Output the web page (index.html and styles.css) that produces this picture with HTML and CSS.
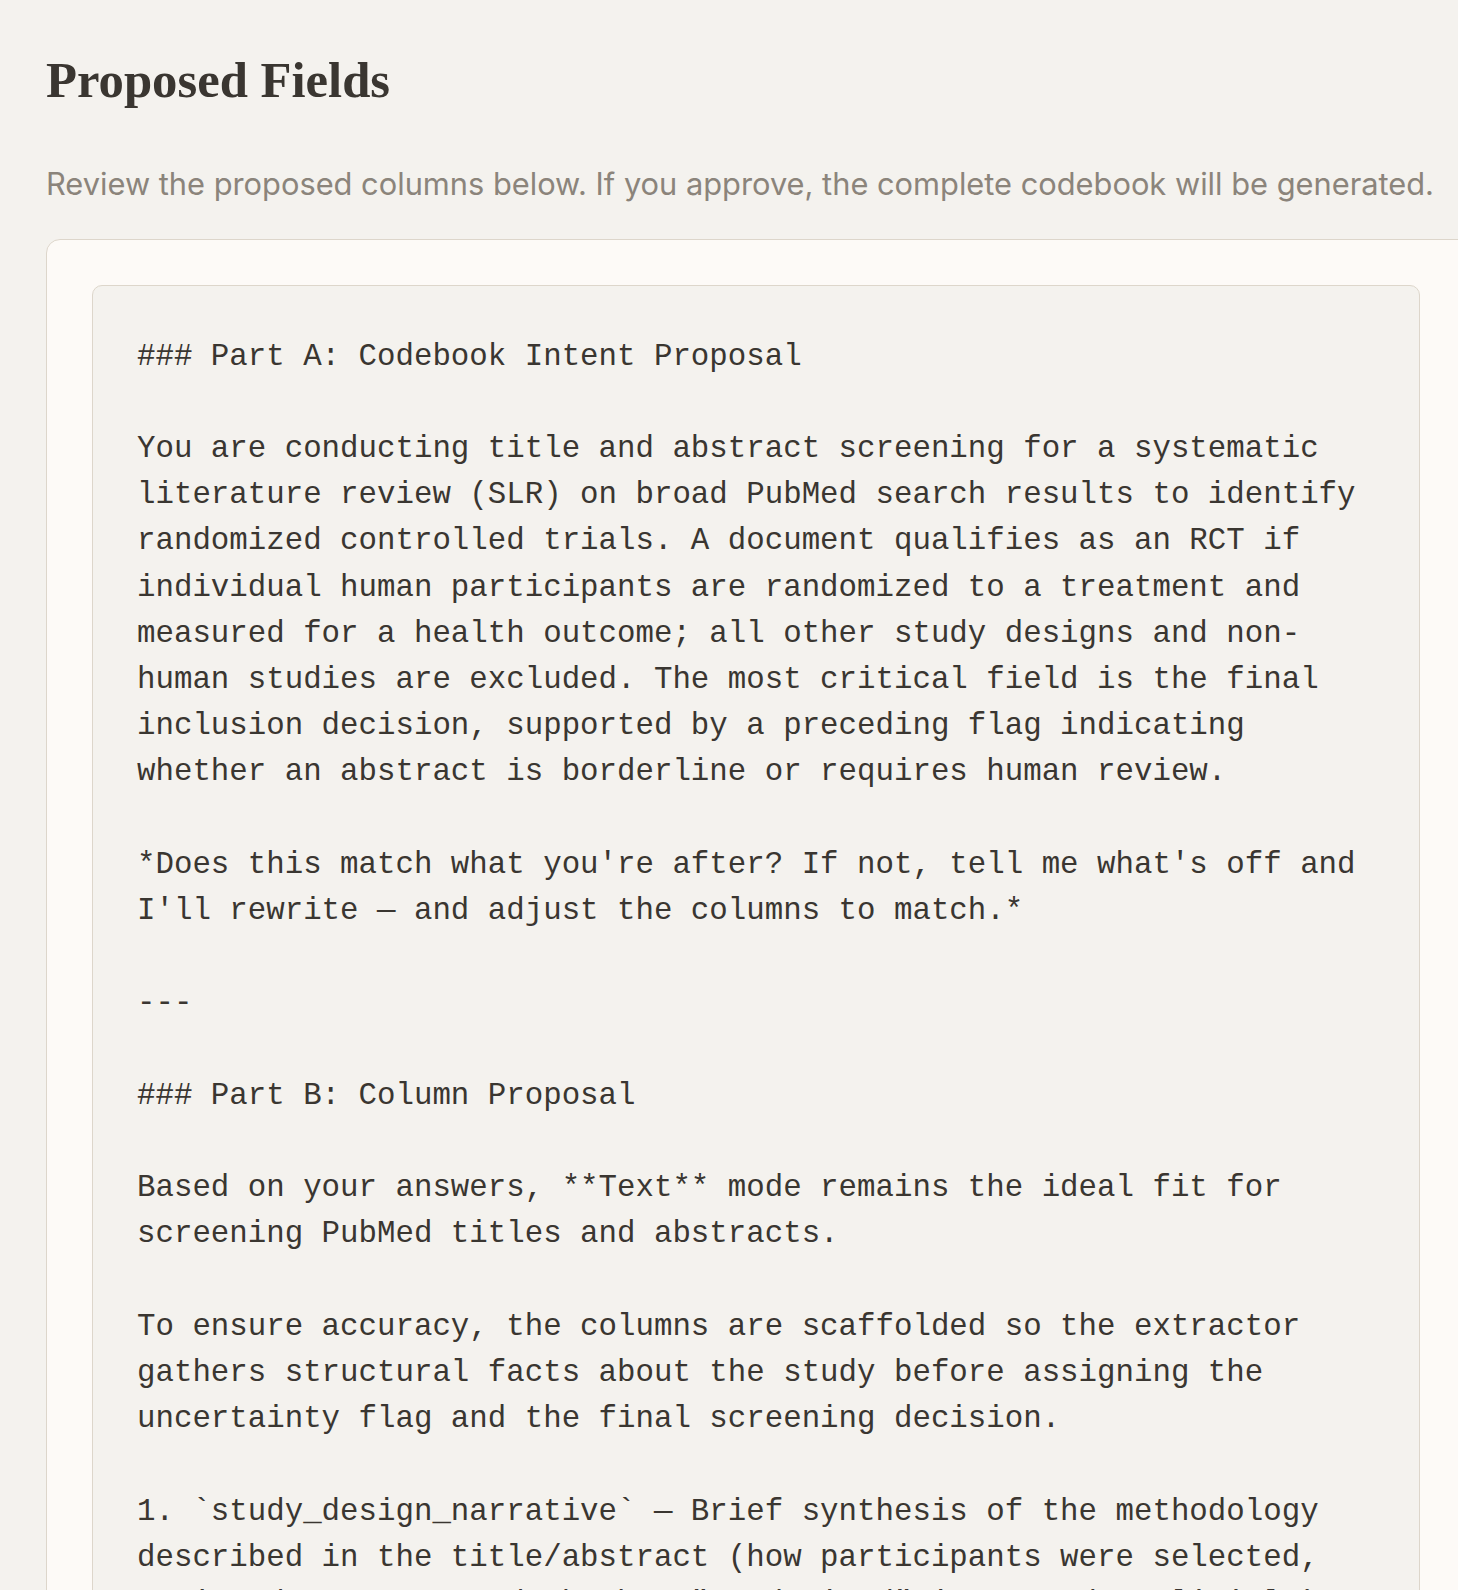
FILE: index.html
```html
<!DOCTYPE html>
<html lang="en">
<head>
<meta charset="utf-8">
<title>Proposed Fields</title>
<link rel="stylesheet" href="styles.css">
</head>
<body>
<main class="page">
  <h1 class="title">Proposed Fields</h1>
  <p class="subtitle">Review the proposed columns below. If you approve, the complete codebook will be generated.</p>
  <section class="card">
<pre class="proposal">### Part A: Codebook Intent Proposal

You are conducting title and abstract screening for a systematic
literature review (SLR) on broad PubMed search results to identify
randomized controlled trials. A document qualifies as an RCT if
individual human participants are randomized to a treatment and
measured for a health outcome; all other study designs and non-
human studies are excluded. The most critical field is the final
inclusion decision, supported by a preceding flag indicating
whether an abstract is borderline or requires human review.

*Does this match what you're after? If not, tell me what's off and
I'll rewrite — and adjust the columns to match.*

---

### Part B: Column Proposal

Based on your answers, **Text** mode remains the ideal fit for
screening PubMed titles and abstracts.

To ensure accuracy, the columns are scaffolded so the extractor
gathers structural facts about the study before assigning the
uncertainty flag and the final screening decision.

1. `study_design_narrative` — Brief synthesis of the methodology
described in the title/abstract (how participants were selected,
assigned to arms, and whether "randomized" is stated explicitly).
</pre>
  </section>
</main>
</body>
</html>
```
FILE: styles.css
```css
html, body {
  margin: 0;
  padding: 0;
  background: #f4f2ee;
  overflow: hidden;
}

.page {
  box-sizing: border-box;
  width: 1458px;
  height: 1590px;
  overflow: hidden;
  padding: 50px 0 0 46px;
}

.title {
  margin: 0;
  font-family: "Liberation Serif", "DejaVu Serif", serif;
  font-weight: 700;
  font-size: 50.7px;
  line-height: 60px;
  color: #3a3631;
}

.subtitle {
  margin: 53px 0 0;
  font-family: Inter, "Noto Sans", sans-serif;
  font-size: 30.8px;
  line-height: 42px;
  color: #8b847b;
  white-space: nowrap;
}

.card {
  margin-top: 34px;
  width: 1440px;
  box-sizing: border-box;
  padding: 44.5px;
  background: #fdfaf7;
  border: 1.5px solid #ddd6cb;
  border-radius: 14px;
}

.proposal {
  margin: 0;
  width: 1328px;
  box-sizing: border-box;
  padding: 48px 44.5px;
  background: #f4f2ee;
  border: 1.5px solid #ddd6cb;
  border-radius: 10px;
  font-family: "Liberation Mono", "DejaVu Sans Mono", monospace;
  font-size: 30.78px;
  line-height: 46.2px;
  color: #3a3631;
  white-space: pre-wrap;
}
```
